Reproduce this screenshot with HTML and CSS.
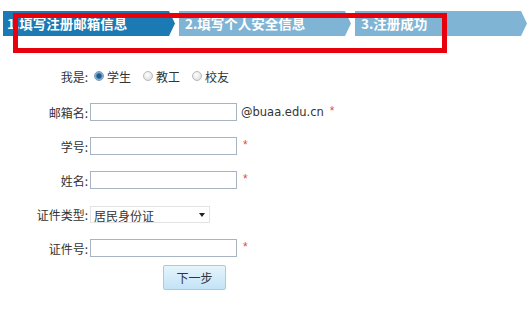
FILE: index.html
```html
<!DOCTYPE html>
<html lang="zh-CN">
<head>
    <meta charset="UTF-8">
    <title>注册 - 填写注册邮箱信息</title>
    <link rel="stylesheet" href="styles.css">
</head>
<body>
    <!-- Barra de etapas -->
    <div class="steps">
        <div class="step step-atual">1.填写注册邮箱信息</div>
        <div class="step">2.填写个人安全信息</div>
        <div class="step">3.注册成功</div>
        <!-- Marcação vermelha por cima -->
        <div class="marca"></div>
    </div>

    <form class="form-registro">
        <div class="linha linha-tipo">
            <label class="rotulo">我是:</label>
            <div class="opcoes">
                <label class="opcao"><input type="radio" name="tipo" checked> 学生</label>
                <label class="opcao"><input type="radio" name="tipo"> 教工</label>
                <label class="opcao"><input type="radio" name="tipo"> 校友</label>
            </div>
        </div>
        <div class="linha">
            <label class="rotulo">邮箱名:</label>
            <input type="text" class="campo">
            <span class="dominio">@buaa.edu.cn</span>
            <span class="obrigatorio">*</span>
        </div>
        <div class="linha">
            <label class="rotulo">学号:</label>
            <input type="text" class="campo">
            <span class="obrigatorio">*</span>
        </div>
        <div class="linha">
            <label class="rotulo">姓名:</label>
            <input type="text" class="campo">
            <span class="obrigatorio">*</span>
        </div>
        <div class="linha">
            <label class="rotulo">证件类型:</label>
            <div class="seletor">
                <select>
                    <option>居民身份证</option>
                    <option>护照</option>
                </select>
            </div>
        </div>
        <div class="linha">
            <label class="rotulo">证件号:</label>
            <input type="text" class="campo">
            <span class="obrigatorio">*</span>
        </div>
        <div class="linha linha-botao">
            <button type="button" class="btn-proximo">下一步</button>
        </div>
    </form>
</body>
</html>
```

FILE: styles.css
```css
/* Base da página */
body {
  margin: 0;
  background-color: #fff;
  font-family: "Noto Sans CJK SC", "Liberation Sans", sans-serif;
  font-size: 12px;
  color: #333;
}

/* Barra de etapas */
.steps {
  position: relative;
  display: flex;
  gap: 4px;
  margin: 11px 3px 0 3px;
  height: 25px;
}

.step {
  width: 172px;
  height: 25px;
  line-height: 25px;
  padding-left: 6px;
  box-sizing: border-box;
  background-color: #7fb4d5; /* Azul claro */
  color: #fff;
  font-size: 13.5px;
  font-weight: bold;
  white-space: nowrap;
  clip-path: polygon(0 0, calc(100% - 6px) 0, 100% 50%, calc(100% - 6px) 100%, 0 100%);
}

.step-atual {
  background-color: #1b79b3; /* Azul escuro */
  padding-left: 4px;
}

/* Retângulo vermelho de destaque */
.marca {
  position: absolute;
  left: 10px;
  top: 2px;
  width: 434px;
  height: 40px;
  box-sizing: border-box;
  border: 5px solid #e8000c;
}

/* Formulário */
.form-registro {
  display: flex;
  flex-direction: column;
  gap: 16px;
  margin-top: 31px;
}

.linha {
  display: flex;
  align-items: center;
  height: 18px;
}

.linha-tipo {
  margin-bottom: 2px;
}

.rotulo {
  width: 90px;
  padding-right: 2px;
  box-sizing: border-box;
  text-align: right;
  flex-shrink: 0;
}

.opcoes {
  display: flex;
  align-items: center;
  gap: 12px;
  margin-left: 4px;
}

.opcao {
  display: flex;
  align-items: center;
  gap: 3px;
}

.opcao input {
  appearance: none;
  width: 10px;
  height: 10px;
  margin: 0;
  border-radius: 50%;
  border: 1px solid #b9b9b9;
  background: radial-gradient(circle at 40% 35%, #fff, #d6d6d6);
}

.opcao input:checked {
  border-color: #7a9cb8;
  background: radial-gradient(circle, #1e5c8f 0 2px, #5f97c4 3px, #dde8f1 5px);
}

.campo {
  width: 147px;
  height: 18px;
  margin: 0;
  padding: 0 3px;
  box-sizing: border-box;
  border: 1px solid #a9b4c2;
  font-family: inherit;
  font-size: 12px;
}

.dominio {
  margin-left: 4px;
  font-family: "DejaVu Sans", sans-serif;
  font-size: 11.5px;
  color: #333;
}

.obrigatorio {
  margin-left: 6px;
  color: #e24b4b;
  font-size: 12px;
  font-family: "Liberation Sans", sans-serif;
  align-self: flex-start;
  line-height: 16px;
}

/* Caixa de seleção */
.seletor {
  position: relative;
  width: 120px;
  height: 17px;
}

.seletor select {
  appearance: none;
  width: 100%;
  height: 100%;
  margin: 0;
  padding: 0 0 0 3px;
  border: 1px solid #e3e3e3;
  background-color: #fff;
  font-family: inherit;
  font-size: 12px;
  color: #333;
}

.seletor::after {
  content: "";
  position: absolute;
  right: 5px;
  top: 7px;
  border-left: 3px solid transparent;
  border-right: 3px solid transparent;
  border-top: 4px solid #222;
  pointer-events: none;
}

/* Botão próximo */
.linha-botao {
  height: 25px;
  margin-top: -8px;
}

.btn-proximo {
  margin-left: 163px;
  width: 63px;
  height: 25px;
  border: 1px solid #a3cde6;
  border-radius: 2px;
  background: linear-gradient(#e6f5fd, #c3e3f6);
  font-family: inherit;
  font-size: 12px;
  color: #333;
  cursor: pointer;
}
```
